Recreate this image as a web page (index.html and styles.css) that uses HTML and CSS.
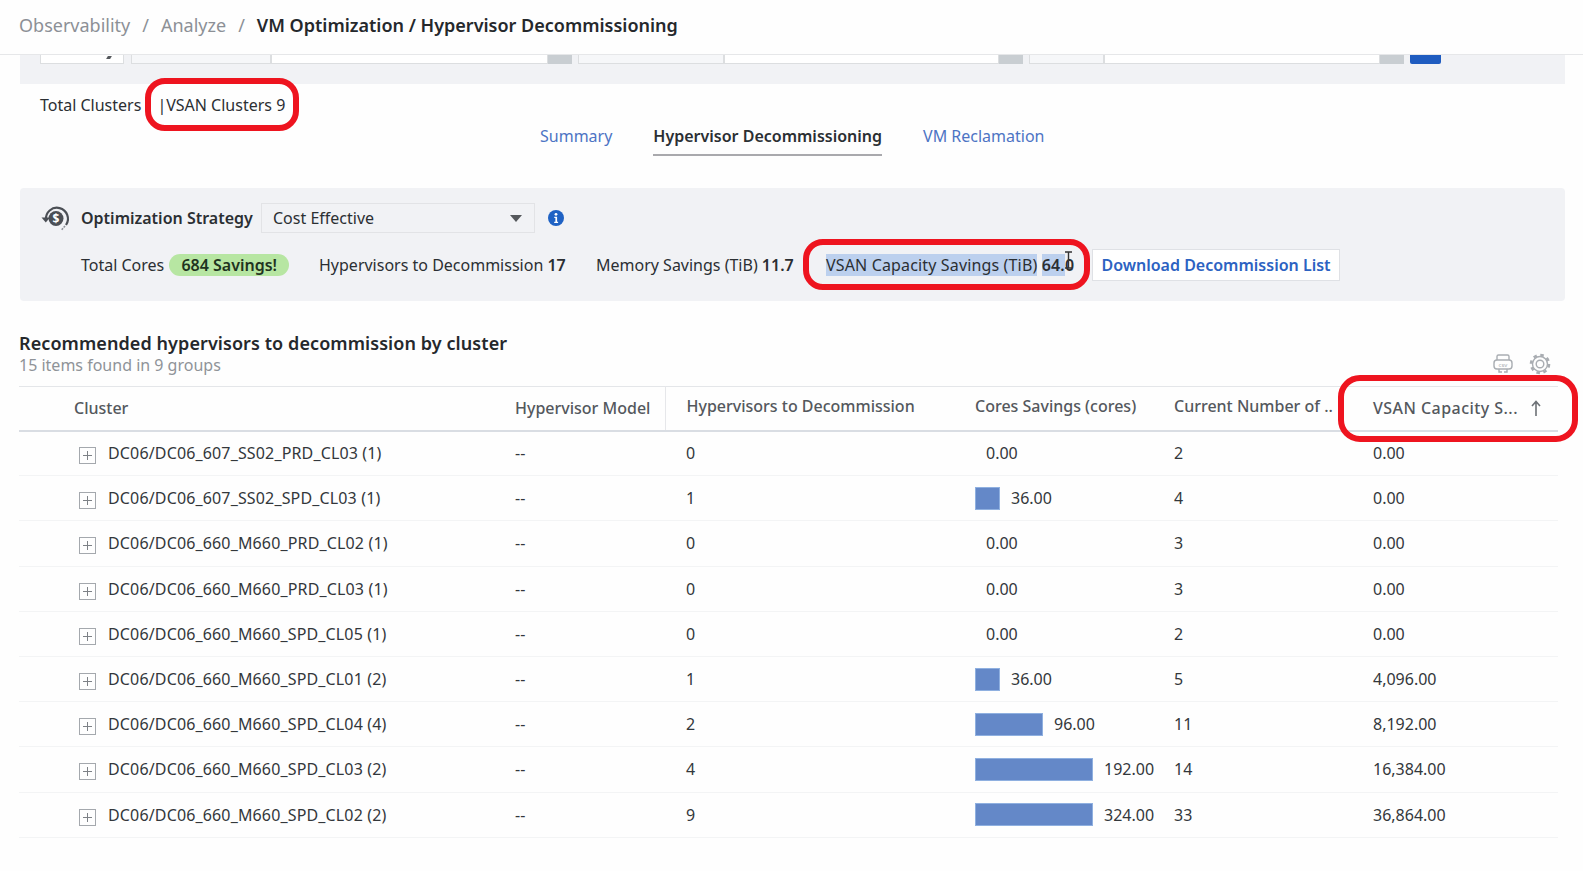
FILE: index.html
```html
<!DOCTYPE html>
<html lang="en">
<head>
  <meta charset="UTF-8" />
  <title>Hypervisor Decommissioning</title>
  <link rel="stylesheet" href="styles.css">
</head>
<body>
  <header class="topbar">
    <span class="crumb">Observability</span>
    <span class="crumb-sep">/</span>
    <span class="crumb">Analyze</span>
    <span class="crumb-sep">/</span>
    <span class="crumb-current">VM Optimization / Hypervisor Decommissioning</span>
  </header>

  <!-- filter bar, scrolled mostly under the header -->
  <div class="filters">
    <div class="field field-a"><i class="tail"></i></div>
    <div class="field field-b"></div>
    <div class="field field-c"></div>
    <div class="clear"></div>
    <div class="field field-d"></div>
    <div class="field field-e"></div>
    <div class="clear"></div>
    <div class="field field-f"></div>
    <div class="field field-g"></div>
    <div class="clear"></div>
    <div class="apply"></div>
  </div>

  <div class="clusters">
    <span>Total Clusters</span>
    <span class="mark mark-clusters">|VSAN Clusters 9</span>
  </div>

  <nav class="tabs">
    <a class="tab">Summary</a>
    <a class="tab tab-active">Hypervisor Decommissioning</a>
    <a class="tab">VM Reclamation</a>
  </nav>

  <section class="strategy">
    <div class="strategy-top">
      <svg class="strategy-icon" width="32" height="30" viewBox="0 0 32 30" fill="none">
        <path d="M6 17A11 11 0 1 1 26 22" stroke="#4b4f55" stroke-width="2.2"/>
        <path d="M1.500 14.500h8.500l-4.200 5z" fill="#4b4f55"/>
        <path d="M25 23l-3.500 4" stroke="#8d9197" stroke-width="1.600" stroke-dasharray="2 1"/>
        <circle cx="16" cy="15.500" r="7.500" fill="#4b4f55"/>
        <text x="16" y="20" class="dollar" text-anchor="middle">$</text>
      </svg>
      <b class="strategy-label">Optimization Strategy</b>
      <div class="select">
        <span>Cost Effective</span>
        <i class="caret"></i>
      </div>
      <svg class="info" width="16" height="16" viewBox="0 0 16 16">
        <circle cx="8" cy="8" r="8" fill="#1f62c4"/>
        <circle cx="8" cy="4.300" r="1.400" fill="#fff"/>
        <path d="M6.300 6.700h2.800v5h1v1.300H6.200v-1.300h1.200V8H6.300z" fill="#fff"/>
      </svg>
    </div>
    <div class="strategy-stats">
      <span class="stat-cores">Total Cores <b class="pill">684 Savings!</b></span>
      <span class="stat-hyp">Hypervisors to Decommission <b>17</b></span>
      <span class="stat-mem">Memory Savings (TiB) <b>11.7</b></span>
      <span class="mark mark-vsan"><span class="selected">VSAN Capacity Savings (TiB)</span> <b class="selected">64.</b><b>0</b>
        <svg class="cursor" width="9" height="18" viewBox="0 0 9 18" fill="none">
          <path d="M1 1h7M1 17h7M4.500 1v16" stroke="#333" stroke-width="1.400"/>
        </svg>
      </span>
      <button class="download">Download Decommission List</button>
    </div>
  </section>

  <section class="results">
    <div class="results-head">
      <div class="results-title">
        <h2>Recommended hypervisors to decommission by cluster</h2>
        <p>15 items found in 9 groups</p>
      </div>
      <div class="tools">
        <svg width="22" height="22" viewBox="0 0 22 22" fill="none" stroke="#a9adb2" stroke-width="1.400">
          <path d="M5 7V3.500a1.500 1.500 0 0 1 1.500-1.500h9A1.500 1.500 0 0 1 17 3.500V7M7 16v3h3M15 16v3h-3"/>
          <rect x="2" y="7" width="18" height="9" rx="3"/>
          <text x="11" y="14" class="csv" text-anchor="middle">csv</text>
        </svg>
        <svg width="22" height="22" viewBox="0 0 22 22" fill="none" stroke="#a9adb2">
          <circle cx="11" cy="11" r="9" stroke-width="2.600" stroke-dasharray="3.500 3.570"/>
          <circle cx="11" cy="11" r="7.500" stroke-width="1.400"/>
          <circle cx="11" cy="11" r="3.800" stroke-width="1.400"/>
        </svg>
      </div>
    </div>

    <table class="grid">
      <colgroup>
        <col class="c-cluster"><col class="c-model"><col class="c-hyp"><col class="c-cores"><col class="c-num"><col class="c-vsan">
      </colgroup>
      <thead>
        <tr>
          <th class="th-cluster">Cluster</th>
          <th class="th-model">Hypervisor Model</th>
          <th class="th-high th-hyp">Hypervisors to Decommission</th>
          <th class="th-high">Cores Savings (cores)</th>
          <th class="th-high">Current Number of ..</th>
          <th><span class="mark mark-head">VSAN Capacity S...<svg class="arrow" width="10" height="16" viewBox="0 0 10 16" fill="none" stroke="#6d7176" stroke-width="1.600"><path d="M5 16V1.500M1 6l4-4.500L9 6"/></svg></span></th>
        </tr>
      </thead>
      <tbody>
        <tr>
          <td class="td-cluster"><i class="expand"></i>DC06/DC06_607_SS02_PRD_CL03 (1)</td><td>--</td><td class="td-hyp">0</td>
          <td><div class="bar-cell"><span class="bar-val">0.00</span></div></td><td>2</td><td>0.00</td>
        </tr>
        <tr>
          <td class="td-cluster"><i class="expand"></i>DC06/DC06_607_SS02_SPD_CL03 (1)</td><td>--</td><td class="td-hyp">1</td>
          <td><div class="bar-cell"><i class="bar" style="width:25px"></i><span>36.00</span></div></td><td>4</td><td>0.00</td>
        </tr>
        <tr>
          <td class="td-cluster"><i class="expand"></i>DC06/DC06_660_M660_PRD_CL02 (1)</td><td>--</td><td class="td-hyp">0</td>
          <td><div class="bar-cell"><span class="bar-val">0.00</span></div></td><td>3</td><td>0.00</td>
        </tr>
        <tr>
          <td class="td-cluster"><i class="expand"></i>DC06/DC06_660_M660_PRD_CL03 (1)</td><td>--</td><td class="td-hyp">0</td>
          <td><div class="bar-cell"><span class="bar-val">0.00</span></div></td><td>3</td><td>0.00</td>
        </tr>
        <tr>
          <td class="td-cluster"><i class="expand"></i>DC06/DC06_660_M660_SPD_CL05 (1)</td><td>--</td><td class="td-hyp">0</td>
          <td><div class="bar-cell"><span class="bar-val">0.00</span></div></td><td>2</td><td>0.00</td>
        </tr>
        <tr>
          <td class="td-cluster"><i class="expand"></i>DC06/DC06_660_M660_SPD_CL01 (2)</td><td>--</td><td class="td-hyp">1</td>
          <td><div class="bar-cell"><i class="bar" style="width:25px"></i><span>36.00</span></div></td><td>5</td><td>4,096.00</td>
        </tr>
        <tr>
          <td class="td-cluster"><i class="expand"></i>DC06/DC06_660_M660_SPD_CL04 (4)</td><td>--</td><td class="td-hyp">2</td>
          <td><div class="bar-cell"><i class="bar" style="width:68px"></i><span>96.00</span></div></td><td>11</td><td>8,192.00</td>
        </tr>
        <tr>
          <td class="td-cluster"><i class="expand"></i>DC06/DC06_660_M660_SPD_CL03 (2)</td><td>--</td><td class="td-hyp">4</td>
          <td><div class="bar-cell"><i class="bar" style="width:118px"></i><span>192.00</span></div></td><td>14</td><td>16,384.00</td>
        </tr>
        <tr>
          <td class="td-cluster"><i class="expand"></i>DC06/DC06_660_M660_SPD_CL02 (2)</td><td>--</td><td class="td-hyp">9</td>
          <td><div class="bar-cell"><i class="bar" style="width:118px"></i><span>324.00</span></div></td><td>33</td><td>36,864.00</td>
        </tr>
      </tbody>
    </table>
  </section>
</body>
</html>
```

FILE: styles.css
```css
* { box-sizing: border-box; }
html, body { height: 871px; overflow: hidden; }
body { margin: 0; background: #fefefe; color: #2b2f33; font-family: "Noto Sans", Arial, sans-serif; font-size: 16px; }
b { font-weight: 600; }

.topbar { height: 55px; display: flex; align-items: center; gap: 12px; padding: 0 19px 5px; border-bottom: 1px solid #e6e7e9; font-size: 18px; }
.crumb, .crumb-sep { color: #8c9096; }
.crumb-current { color: #25282c; font-weight: 600; }

.filters { height: 29px; margin: 0 18px 0 20px; padding-left: 20px; background: #f1f2f5; display: flex; align-items: flex-start; }
.field { height: 9px; background: #fff; border: 1px solid #dcdee0; border-top: 0; }
.field-a { width: 84px; margin-right: 7px; padding: 1px 0 0 66px; }
.tail { display: block; width: 4px; height: 3px; background: #55585c; transform: skewX(-30deg); }
.field-b, .field-d, .field-f { background: #f6f7f9; }
.field-b { width: 140px; }
.field-c { width: 277px; }
.field-d { width: 146px; }
.field-e { width: 275px; }
.field-f { width: 75px; }
.field-g { width: 276px; }
.clear { width: 24px; height: 9px; background: #c9ced2; margin-right: 6px; }
.apply { width: 31px; height: 9px; background: #1f5cc0; border-radius: 0 0 2px 2px; }

/* red hand-drawn annotations lying over the page */
.mark { position: relative; display: inline-block; }
.mark::after { content: ""; position: absolute; border: 6px solid #ee141f; border-radius: 20px; }
.mark-clusters::after { left: -12px; right: -14px; top: -16px; bottom: -15px; }
.mark-vsan::after { left: -23px; right: 2px; top: -15px; bottom: -14px; }
.mark-head::after { left: -35px; right: -37px; top: -22px; bottom: -23px; border-radius: 22px; }

.clusters { margin: 10px 0 0 40px; height: 22px; line-height: 22px; display: flex; gap: 16px; }

.tabs { height: 40px; margin-top: 8px; display: flex; padding-left: 540px; gap: 41px; }
.tab { height: 32px; padding-top: 1px; color: #4d74c4; }
.tab-active { color: #2b2f33; font-weight: 600; border-bottom: 2px solid #a9a9ad; }

.strategy { height: 113px; margin: 24px 18px 0 20px; padding: 15px 0 0 20px; background: #f1f2f5; border-radius: 4px; }
.strategy-top { display: flex; align-items: center; height: 30px; }
.strategy-icon { flex: none; margin-right: 9px; }
.dollar { font-size: 12px; font-weight: 700; fill: #fff; stroke: none; }
.strategy-label { width: 180px; white-space: nowrap; }
.select { width: 274px; height: 30px; padding: 0 12px 0 11px; display: flex; align-items: center; justify-content: space-between; border: 1px solid #e2e3e6; }
.caret { border: 6px solid transparent; border-top: 7px solid #55585c; border-bottom: 0; }
.info { margin-left: 13px; }

.strategy-stats { display: flex; align-items: center; margin: 16px 0 0 41px; height: 32px; white-space: nowrap; }
.pill { display: inline-block; height: 22px; line-height: 22px; padding: 0 12px; margin-left: 1px; background: #b7e6a2; border-radius: 11px; color: #1f3320; }
.stat-cores { width: 238px; }
.stat-hyp { width: 277px; }
.stat-mem { width: 230px; }
.mark-vsan { width: 266px; letter-spacing: 0.15px; }
.selected { background: #bcd0ee; }
.cursor { position: absolute; right: 19px; top: -3px; }
.download { height: 32px; width: 248px; background: #fff; color: #2c62c2; font: 600 16px "Noto Sans", Arial, sans-serif; border: 1px solid #dfe1e5; padding: 0; }

.results { margin: 19px 25px 0 19px; }
.results-head { height: 66px; display: flex; justify-content: space-between; align-items: flex-end; }
.results-title { align-self: flex-start; padding-top: 11px; }
h2 { margin: 0; font-size: 18px; font-weight: 600; line-height: 24px; letter-spacing: 0.08px; color: #25282c; }
.results-title p { margin: 0; line-height: 20px; color: #8f9398; }
.tools { display: flex; gap: 15px; margin-bottom: 11px; padding-right: 7px; }
.csv { font-size: 6px; fill: #a9adb2; stroke: none; }

.grid { width: 1539px; border-collapse: collapse; table-layout: fixed; }
.c-cluster { width: 486px; }
.c-model { width: 160px; }
.c-hyp { width: 300px; }
.c-cores { width: 199px; }
.c-num { width: 199px; }
.grid th { height: 44px; padding: 0 0 0 10px; text-align: left; font-weight: 500; color: #54585d; border-top: 1px solid #e4e6e9; border-bottom: 2px solid #d9dde3; white-space: nowrap; }
.grid th.th-cluster { padding-left: 55px; }
.grid th.th-model { border-right: 1px solid #e6e7ea; }
.grid th.th-high { padding-bottom: 5px; }
.grid th.th-hyp, .grid td.td-hyp { padding-left: 21px; }
.grid td { height: 45.2px; padding: 0 0 0 10px; border-bottom: 1px solid #f3f4f5; white-space: nowrap; color: #33373b; }
.grid td.td-cluster { padding-left: 60px; letter-spacing: 0.15px; }
.expand { display: inline-block; position: relative; top: 5px; width: 17px; height: 17px; margin-right: 12px; border: 1px solid #a4a8ad; background: linear-gradient(#7d8186, #7d8186) center / 9px 1px no-repeat, linear-gradient(#7d8186, #7d8186) center / 1px 9px no-repeat; }
.mark-head { letter-spacing: 0.45px; }
.arrow { display: inline-block; margin-left: 13px; vertical-align: -2px; }

.bar-cell { display: flex; align-items: center; gap: 11px; }
.bar { display: block; height: 23px; background: #6488c8; border: 1px solid #8fb0e0; }
.bar-val { margin-left: 11px; }
```
